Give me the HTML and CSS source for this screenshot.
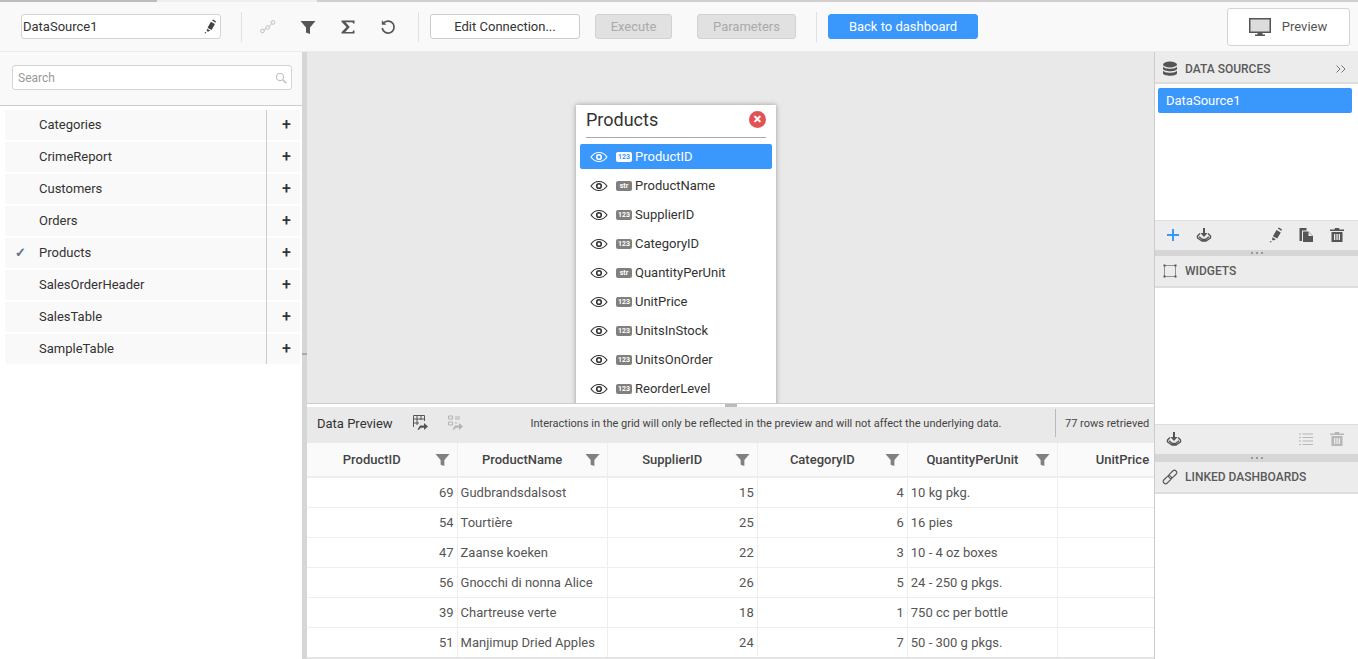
FILE: index.html
```html
<!DOCTYPE html>
<html>
<head>
    <title>Data Source Designer</title>
    <meta name="viewport" content="width=device-width, initial-scale=1">
    <link rel="stylesheet" href="styles.css">
</head>
<body>
    <svg class="defs" width="0" height="0">
        <symbol id="i-edit" viewBox="0 0 16 16"><path d="M9.500 3l4.300 2.400-3.600 6.200-4.300-2.400zM10.800 1.500l1-.9 3 1.700-.3 1.600zM5.400 10.300l3.400 2-2.400 1.200-1.300-.8zM2.600 15l1-1.100 1 .6-.6 1z"/></symbol>
        <symbol id="i-filter" viewBox="0 0 16 16"><path d="M.5 2h15L10 8.500V15l-4-1.500v-5z"/></symbol>
        <symbol id="i-trash" viewBox="0 0 16 16"><path d="M6 1h4l.5 1.500H15V4H1V2.500h4.500zM2.500 5h11v10h-11zM5 7v6h1.300V7zM7.400 7v6h1.300V7zM9.700 7v6H11V7z" fill-rule="evenodd"/></symbol>
        <symbol id="i-import" viewBox="0 0 16 16"><path d="M7 1h2v5h2.500L8 10 4.500 6H7z"/><path d="M4 6.500L1.500 9v2L6 14h4l4.500-3V9L12 6.500M3 9.800L6.500 12.500h3L13 9.800" fill="none" stroke="currentColor" stroke-width="1.400"/></symbol>
        <symbol id="i-eye" viewBox="0 0 18 12"><path d="M1 6c2-3 5-4.500 8-4.500S15 3 17 6c-2 3-5 4.500-8 4.500S3 9 1 6z" fill="none" stroke="currentColor" stroke-width="1.100"/><circle cx="9" cy="6" r="2.300" fill="none" stroke="currentColor" stroke-width="1.600"/></symbol>
    </svg>

    <div class="topstrip"><div class="strip-dark"></div><div class="strip-light"></div></div>

    <header class="toolbar">
        <div class="name-box">
            <span>DataSource1</span>
            <svg class="icon-14"><use href="#i-edit"/></svg>
        </div>
        <div class="tool-sep"></div>
        <div class="tool-icons">
            <svg class="tool-icon faded" viewBox="0 0 16 16" fill="none" stroke="currentColor"><circle cx="2.500" cy="12" r="1.800"/><circle cx="7.500" cy="8.500" r="1.800"/><circle cx="13" cy="3.500" r="1.800"/><path d="M4 11l2-1.500M9 7.500l2.700-2.700"/></svg>
            <svg class="tool-icon"><use href="#i-filter"/></svg>
            <svg class="tool-icon" viewBox="0 0 16 16"><path d="M1.500 1.500h13v3h-1.500l-.5-1.300H5.500L9.800 8l-4.500 5h7.200l.6-1.500h1.400v3h-13v-1.300L6.500 8 1.500 2.800z"/></svg>
            <svg class="tool-icon" viewBox="0 0 16 16" fill="none" stroke="currentColor" stroke-width="1.700"><path d="M4 3.700A6 6 0 1 1 2.200 9"/><path d="M1.800 1.200v4.600h4.600z" fill="currentColor" stroke="none"/></svg>
        </div>
        <div class="tool-sep sep-two"></div>
        <button class="btn btn-edit">Edit Connection...</button>
        <button class="btn btn-off btn-execute">Execute</button>
        <button class="btn btn-off btn-params">Parameters</button>
        <div class="tool-sep"></div>
        <button class="btn btn-back">Back to dashboard</button>
        <button class="btn-preview">
            <svg class="monitor" viewBox="0 0 24 20"><path d="M1 1h22v15H14.500v1.500H17V19H7v-1.500h2.500V16H1z"/><path d="M2.500 2.500h19v12h-19z" fill="#dcdcdc"/></svg>
            <span>Preview</span>
        </button>
    </header>

    <main class="main">
        <aside class="left">
            <div class="search-wrap">
                <div class="search-box">
                    <span>Search</span>
                    <svg class="search-icon" viewBox="0 0 12 12" fill="none" stroke="currentColor"><circle cx="5" cy="5" r="3.700"/><path d="M8 8l3.300 3.300" stroke-width="1.300"/></svg>
                </div>
            </div>
            <ul class="tables">
                <li><span class="check"></span><span class="table-name">Categories</span><span class="add">+</span></li>
                <li><span class="check"></span><span class="table-name">CrimeReport</span><span class="add">+</span></li>
                <li><span class="check"></span><span class="table-name">Customers</span><span class="add">+</span></li>
                <li><span class="check"></span><span class="table-name">Orders</span><span class="add">+</span></li>
                <li><span class="check">✓</span><span class="table-name">Products</span><span class="add">+</span></li>
                <li><span class="check"></span><span class="table-name">SalesOrderHeader</span><span class="add">+</span></li>
                <li><span class="check"></span><span class="table-name">SalesTable</span><span class="add">+</span></li>
                <li><span class="check"></span><span class="table-name">SampleTable</span><span class="add">+</span></li>
            </ul>
        </aside>

        <div class="splitter-v"><span class="grip-v"></span></div>

        <section class="center">
            <div class="canvas">
                <div class="card">
                    <div class="card-head">
                        <span>Products</span>
                        <span class="close">×</span>
                    </div>
                    <div class="field active"><svg class="eye"><use href="#i-eye"/></svg><span class="type">123</span>ProductID</div>
                    <div class="field"><svg class="eye"><use href="#i-eye"/></svg><span class="type">str</span>ProductName</div>
                    <div class="field"><svg class="eye"><use href="#i-eye"/></svg><span class="type">123</span>SupplierID</div>
                    <div class="field"><svg class="eye"><use href="#i-eye"/></svg><span class="type">123</span>CategoryID</div>
                    <div class="field"><svg class="eye"><use href="#i-eye"/></svg><span class="type">str</span>QuantityPerUnit</div>
                    <div class="field"><svg class="eye"><use href="#i-eye"/></svg><span class="type">123</span>UnitPrice</div>
                    <div class="field"><svg class="eye"><use href="#i-eye"/></svg><span class="type">123</span>UnitsInStock</div>
                    <div class="field"><svg class="eye"><use href="#i-eye"/></svg><span class="type">123</span>UnitsOnOrder</div>
                    <div class="field"><svg class="eye"><use href="#i-eye"/></svg><span class="type">123</span>ReorderLevel</div>
                </div>
            </div>
            <div class="splitter-h"><span class="grip-h"></span></div>
            <div class="preview-bar">
                <span class="preview-title">Data Preview</span>
                <svg class="bar-icon" viewBox="0 0 18 18" fill="none" stroke="currentColor"><path d="M2.500 13V1.500h11V7M2.500 5h11M2.500 9H8M6 1.500V11M10 1.500V6"/><path d="M9 11.500h4V9l4 3.500-4 3.500v-2.300H10L7.500 16l-1-.5z" fill="currentColor" stroke="none"/></svg>
                <svg class="bar-icon faded" viewBox="0 0 18 18" fill="none" stroke="currentColor"><path d="M2.500 2h4v3h-4zM2.500 8h4v3h-4zM9 3h5M9 5h5M9 9h2"/><path d="M9 11.500h4V9l4 3.500-4 3.500v-2.300H10L7.500 16l-1-.5z" fill="currentColor" stroke="none"/></svg>
                <span class="preview-note">Interactions in the grid will only be reflected in the preview and will not affect the underlying data.</span>
                <span class="preview-count">77 rows retrieved</span>
            </div>
            <div class="grid-wrap">
                <table class="grid">
                    <thead>
                        <tr>
                            <th><span>ProductID</span><svg class="th-filter"><use href="#i-filter"/></svg></th>
                            <th><span>ProductName</span><svg class="th-filter"><use href="#i-filter"/></svg></th>
                            <th><span>SupplierID</span><svg class="th-filter"><use href="#i-filter"/></svg></th>
                            <th><span>CategoryID</span><svg class="th-filter"><use href="#i-filter"/></svg></th>
                            <th><span>QuantityPerUnit</span><svg class="th-filter"><use href="#i-filter"/></svg></th>
                            <th><span>UnitPrice</span></th>
                        </tr>
                    </thead>
                    <tbody>
                        <tr><td class="num">69</td><td>Gudbrandsdalsost</td><td class="num">15</td><td class="num">4</td><td>10 kg pkg.</td><td></td></tr>
                        <tr><td class="num">54</td><td>Tourtière</td><td class="num">25</td><td class="num">6</td><td>16 pies</td><td></td></tr>
                        <tr><td class="num">47</td><td>Zaanse koeken</td><td class="num">22</td><td class="num">3</td><td>10 - 4 oz boxes</td><td></td></tr>
                        <tr><td class="num">56</td><td>Gnocchi di nonna Alice</td><td class="num">26</td><td class="num">5</td><td>24 - 250 g pkgs.</td><td></td></tr>
                        <tr><td class="num">39</td><td>Chartreuse verte</td><td class="num">18</td><td class="num">1</td><td>750 cc per bottle</td><td></td></tr>
                        <tr><td class="num">51</td><td>Manjimup Dried Apples</td><td class="num">24</td><td class="num">7</td><td>50 - 300 g pkgs.</td><td></td></tr>
                    </tbody>
                </table>
            </div>
        </section>

        <aside class="right">
            <div class="panel-head head-first">
                <svg class="head-icon" viewBox="0 0 16 16"><ellipse cx="8" cy="3.500" rx="7" ry="3"/><path d="M1 5.500c1 3 13 3 14 0v2.500c-1 3-13 3-14 0zM1 9.500c1 3 13 3 14 0V12.500c-1 3-13 3-14 0z"/></svg>
                <span>DATA SOURCES</span>
                <svg class="collapse" viewBox="0 0 10 8" fill="none" stroke="currentColor"><path d="M.5 .5L4 4 .5 7.500M5.500 .5L9 4 5.500 7.500"/></svg>
            </div>
            <div class="panel-body body-sources">
                <div class="source active">DataSource1</div>
            </div>
            <div class="panel-tools">
                <svg class="plus" viewBox="0 0 14 14"><path d="M6 1h2v5h5v2H8v5H6V8H1V6h5z"/></svg>
                <svg class="tool-16"><use href="#i-import"/></svg>
                <svg class="tool-16 push"><use href="#i-edit"/></svg>
                <svg class="tool-16" viewBox="0 0 16 16"><path d="M1.500 1h7v2.500H4V14H1.500zM5 4.500h5.500L15 9v6H5zM10.500 5v4H14.500" fill-rule="evenodd"/></svg>
                <svg class="tool-16"><use href="#i-trash"/></svg>
            </div>
            <div class="splitter-r"><span class="dots"></span></div>
            <div class="panel-head">
                <svg class="head-icon" viewBox="0 0 16 16" fill="none" stroke="currentColor"><path d="M3 2.500h10M3 13.500h10M2.500 3v10M13.500 3v10" stroke-width=".6"/><path d="M1.500 1.500h2v2h-2zM12.500 1.500h2v2h-2zM1.500 12.500h2v2h-2zM12.500 12.500h2v2h-2z" fill="currentColor" stroke="none"/></svg>
                <span>WIDGETS</span>
            </div>
            <div class="panel-body body-widgets"></div>
            <div class="panel-tools">
                <svg class="tool-16"><use href="#i-import"/></svg>
                <svg class="tool-16 push faded" viewBox="0 0 16 16"><path d="M1 2.500h2v1H1zM4.500 2.500H15v1H4.500zM1 6h2v1H1zM4.500 6H15v1H4.500zM1 9.500h2v1H1zM4.500 9.500H15v1H4.500zM1 13h2v1H1zM4.500 13H15v1H4.500z"/></svg>
                <svg class="tool-16 faded"><use href="#i-trash"/></svg>
            </div>
            <div class="splitter-r tall"><span class="dots"></span></div>
            <div class="panel-head">
                <svg class="head-icon" viewBox="0 0 16 16" fill="none" stroke="currentColor" stroke-width="1.100"><g transform="rotate(-45 8 8)"><rect x="-.5" y="5.700" width="9.500" height="4.600" rx="2.300"/><rect x="7" y="5.700" width="9.500" height="4.600" rx="2.300"/></g></svg>
                <span>LINKED DASHBOARDS</span>
            </div>
            <div class="panel-body body-linked"></div>
        </aside>
    </main>
</body>
</html>
```

FILE: styles.css
```css
* {
    box-sizing: border-box;
}
html, body {
    height: 100%;
}
body {
    margin: 0;
    font-family: Roboto, "Liberation Sans", sans-serif;
    font-size: 13px;
    color: #333;
    background: #fff;
    overflow: hidden;
    display: flex;
    flex-direction: column;
}
button {
    font-family: inherit;
}
svg {
    flex: none;
}
svg:not([fill]) {
    fill: currentColor;
}
.defs {
    position: absolute;
}
.faded {
    opacity: 0.35;
}

/* top strip */
.topstrip {
    height: 2px;
    flex: none;
    display: flex;
    background: #d0d0d0;
}
.strip-dark {
    width: 157px;
    background: #bdbdbd;
}
.strip-light {
    width: 160px;
    background: #efefef;
}

/* toolbar */
.toolbar {
    height: 50px;
    flex: none;
    display: flex;
    align-items: center;
    padding: 0 8px 0 21px;
    background: #f9f9f9;
    border-bottom: 1px solid #ededed;
}
.name-box {
    width: 200px;
    height: 25px;
    display: flex;
    align-items: center;
    justify-content: space-between;
    padding: 0 3px 0 1px;
    background: #fff;
    border: 1px solid #d4d4d4;
    border-radius: 3px;
}
.icon-14 {
    width: 15px;
    height: 15px;
    color: #444;
}
.tool-sep {
    width: 1px;
    height: 30px;
    margin: 0 11px 0 20px;
    background: #dde2e6;
}
.sep-two {
    margin-left: 22px;
}
.tool-icons {
    display: flex;
    gap: 24px;
    padding: 0 0 0 7px;
}
.tool-icon {
    width: 16px;
    height: 16px;
    color: #555;
}
.btn {
    height: 25px;
    font-size: 13px;
    border-radius: 3px;
    border: 1px solid #ccc;
    background: #fff;
    color: #333;
    padding: 0;
}
.btn-edit {
    width: 150px;
}
.btn-off {
    background: #e1e1e1;
    border-color: #d2d2d2;
    color: #aaa;
}
.btn-execute {
    width: 77px;
    margin-left: 15px;
}
.btn-params {
    width: 99px;
    margin-left: 25px;
}
.btn-back {
    width: 150px;
    background: #3a97fb;
    border-color: #3a97fb;
    color: #fff;
}
.btn-preview {
    width: 123px;
    height: 38px;
    margin-left: auto;
    display: flex;
    align-items: center;
    justify-content: center;
    gap: 10px;
    padding: 0 8px 0 6px;
    font-size: 13px;
    color: #555;
    background: #fff;
    border: 1px solid #d4d4d4;
    border-radius: 3px;
}
.monitor {
    width: 24px;
    height: 20px;
    color: #555;
}

/* page body */
.main {
    flex: 1;
    min-height: 0;
    display: flex;
}

/* left list */
.left {
    width: 302px;
    flex: none;
    background: #fff;
}
.search-wrap {
    height: 54px;
    padding: 13px 10px 0 12px;
    background: #f9f9f9;
    border-bottom: 1px solid #ccc;
}
.search-box {
    height: 25px;
    display: flex;
    align-items: center;
    justify-content: space-between;
    padding: 0 4px 0 5px;
    font-size: 12px;
    color: #999;
    background: #fff;
    border: 1px solid #d4d4d4;
    border-radius: 3px;
}
.search-icon {
    width: 12px;
    height: 12px;
    color: #bbb;
}
.tables {
    list-style: none;
    margin: 0;
    padding: 4px 2px 0 5px;
}
.tables li {
    height: 30px;
    margin-bottom: 2px;
    display: flex;
    background: #f9f9f9;
    line-height: 30px;
}
.check {
    width: 34px;
    padding-left: 10px;
    color: #5f7388;
    font-size: 13px;
    font-weight: 700;
}
.table-name {
    flex: 1;
    height: 30px;
    border-right: 1px solid #ccc;
}
.tables li:not(:last-child) .table-name {
    height: 32px;
}
.add {
    width: 33px;
    padding-left: 6px;
    text-align: center;
    font-size: 16px;
    font-weight: 500;
    color: #333;
}

/* splitters */
.splitter-v {
    width: 5px;
    flex: none;
    position: relative;
    background: #d6d6d6;
}
.grip-v {
    position: absolute;
    left: 0;
    top: 301px;
    width: 5px;
    height: 2px;
    background: #aaa;
}
.splitter-h {
    height: 4px;
    flex: none;
    display: flex;
    justify-content: center;
    background: #fff;
    border-top: 1px solid #ccc;
}
.grip-h {
    width: 12px;
    height: 3px;
    background: #bbb;
}

/* center */
.center {
    flex: 1;
    min-width: 0;
    display: flex;
    flex-direction: column;
    border-right: 1px solid #ccc;
}
.canvas {
    height: 351px;
    flex: none;
    position: relative;
    overflow: hidden;
    background: #e9e9e9;
}
.card {
    position: absolute;
    left: 269px;
    top: 53px;
    width: 200px;
    height: 320px;
    padding: 0 4px;
    background: #fff;
    box-shadow: 0 0 5px rgba(0, 0, 0, 0.35);
}
.card-head {
    height: 33px;
    margin: 0 6px 6px;
    display: flex;
    align-items: center;
    justify-content: space-between;
    padding-bottom: 4px;
    font-size: 18px;
    border-bottom: 1px solid #aaa;
}
.close {
    width: 17px;
    height: 17px;
    border-radius: 50%;
    background: #e25353;
    color: #fff;
    font-size: 15px;
    font-weight: 700;
    line-height: 16px;
    text-align: center;
}
.field {
    height: 25px;
    margin-bottom: 4px;
    display: flex;
    align-items: center;
    padding-left: 10px;
    border-radius: 2px;
}
.field.active {
    background: #3a97fb;
    color: #fff;
}
.eye {
    width: 18px;
    height: 12px;
    margin-right: 8px;
}
.type {
    width: 16px;
    height: 10px;
    margin-right: 3px;
    border-radius: 2px;
    background: #808080;
    color: #fff;
    font-size: 7px;
    font-weight: 700;
    line-height: 10px;
    text-align: center;
}
.active .type {
    background: #fff;
    color: #3a97fb;
}

/* data preview */
.preview-bar {
    height: 36px;
    flex: none;
    display: flex;
    align-items: center;
    padding: 0 0 4px 10px;
    background: #e9e9e9;
}
.preview-title {
    width: 94px;
}
.bar-icon {
    width: 18px;
    height: 18px;
    margin-right: 17px;
    color: #555;
}
.preview-note {
    width: 568px;
    padding-left: 2px;
    font-size: 11px;
    text-align: center;
    color: #444;
}
.preview-count {
    height: 28px;
    margin-left: 6px;
    padding-left: 9px;
    line-height: 30px;
    font-size: 11px;
    white-space: nowrap;
    color: #444;
    border-left: 1px solid #bbb;
}
.grid-wrap {
    flex: 1;
    min-height: 0;
    overflow: hidden;
    border-bottom: 2px solid #e4e4e4;
}
.grid {
    width: 901px;
    table-layout: fixed;
    border-collapse: collapse;
}
.grid th, .grid td {
    width: 150px;
    border-right: 1px solid #eee;
    border-bottom: 1px solid #eee;
}
.grid th {
    height: 34px;
    position: relative;
    padding: 0 20px 0 0;
    font-weight: 500;
    text-align: center;
    color: #444;
    background: #fafafa;
    border-bottom: 2px solid #eee;
}
.th-filter {
    position: absolute;
    right: 7px;
    top: 9px;
    width: 15px;
    height: 15px;
    color: #808080;
}
.grid td {
    height: 30px;
    padding: 0 3px;
    color: #555;
    white-space: nowrap;
}
.grid td.num {
    text-align: right;
}

/* right panels */
.right {
    width: 203px;
    flex: none;
    display: flex;
    flex-direction: column;
    background: #fff;
}
.panel-head {
    height: 32px;
    flex: none;
    display: flex;
    align-items: center;
    gap: 7px;
    padding: 0 12px 0 7px;
    font-size: 12px;
    font-weight: 500;
    color: #5a5a5a;
    background: #ececec;
    border-bottom: 2px solid #ddd;
}
.head-first {
    padding-top: 4px;
}
.head-icon {
    width: 16px;
    height: 16px;
    color: #555;
}
.collapse {
    width: 10px;
    height: 8px;
    margin-left: auto;
    color: #777;
}
.panel-body {
    flex: none;
}
.body-sources {
    height: 136px;
    padding: 4px 6px 0 3px;
}
.body-widgets {
    height: 136px;
}
.body-linked {
    flex: 1;
}
.source {
    height: 25px;
    padding-left: 8px;
    line-height: 25px;
    border-radius: 2px;
}
.source.active {
    background: #3a97fb;
    color: #fff;
}
.panel-tools {
    height: 30px;
    flex: none;
    display: flex;
    align-items: center;
    gap: 15px;
    padding: 0 13px 2px 11px;
    color: #555;
    background: #ededed;
    border-top: 1px solid #ddd;
}
.tool-16 {
    width: 16px;
    height: 16px;
}
.plus {
    width: 14px;
    height: 14px;
    margin-right: 1px;
    color: #3a97fb;
}
.push {
    margin-left: auto;
}
.splitter-r {
    height: 6px;
    flex: none;
    display: flex;
    justify-content: center;
    align-items: center;
    background: #d6d6d6;
}
.splitter-r.tall {
    height: 8px;
}
.dots {
    width: 2px;
    height: 2px;
    background: #999;
    box-shadow: -5px 0 #999, 5px 0 #999;
}
```
